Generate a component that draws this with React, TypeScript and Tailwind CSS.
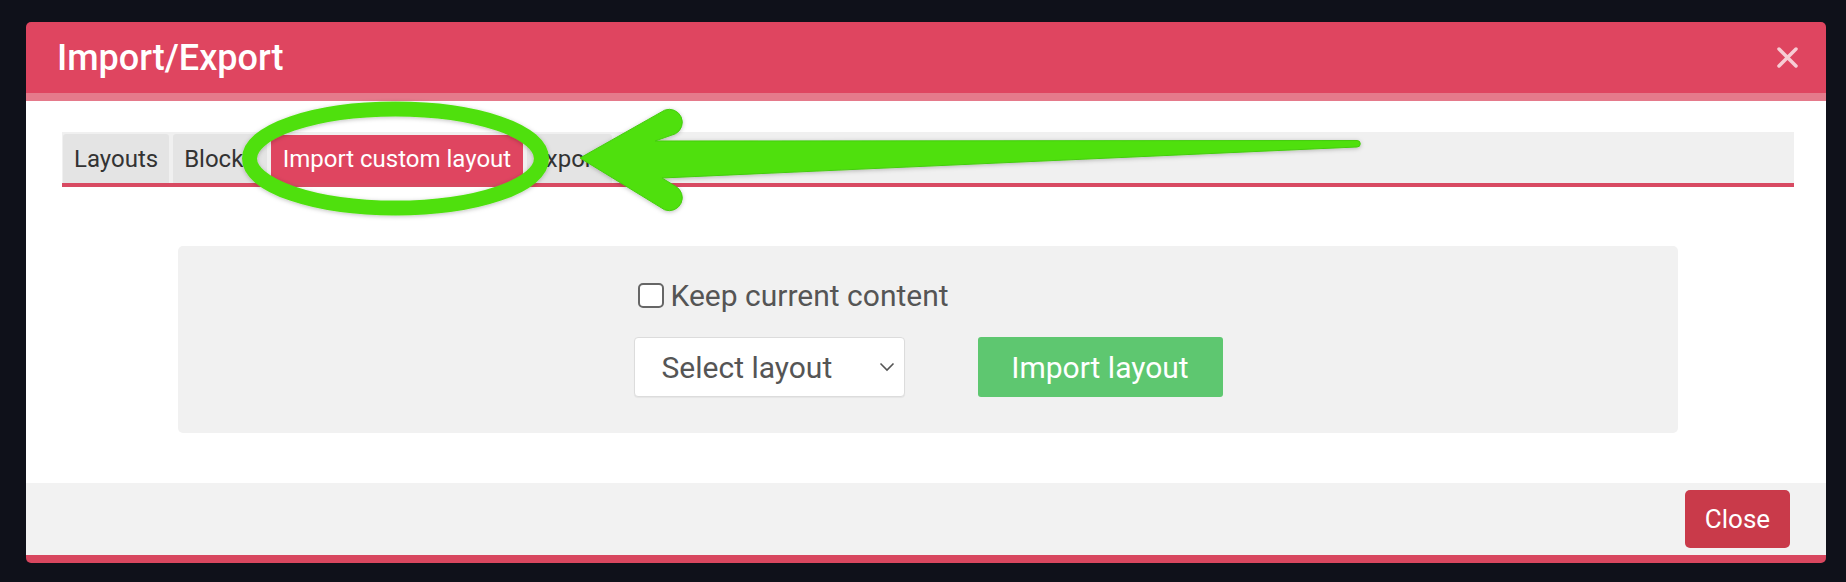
import React from "react";

const tabs = [
  { label: "Layouts", cls: "px-[11px]" },
  { label: "Blocks", cls: "px-[11px]" },
  { label: "Import custom layout", cls: "px-[12px]", active: true },
  { label: "Export", cls: "pl-[5px] pr-[11px]" },
];

function Annotation() {
  return (
    <svg
      className="pointer-events-none absolute left-0 top-0"
      width="1846"
      height="582"
      viewBox="0 0 1846 582"
    >
      <defs>
        <filter id="soft" x="-10%" y="-30%" width="120%" height="160%">
          <feDropShadow dx="0" dy="1" stdDeviation="2" floodColor="#000" floodOpacity="0.25" />
        </filter>
      </defs>
      <g filter="url(#soft)">
        <ellipse cx="395.5" cy="158.5" rx="146" ry="49.5" fill="none" stroke="#4fe00f" strokeWidth="15" />
        <path
          d="M580 158 L664.6 110.2 A13 13 0 0 1 675.4 133.8 L655 141 L1357 140.5 A3.25 3.25 0 0 1 1357 147 L662 178 L675.4 186.2 A13 13 0 0 1 664.6 209.8 Z"
          fill="#4fe00f"
          stroke="#45cc0c"
          strokeWidth="1"
          strokeLinejoin="round"
        />
      </g>
    </svg>
  );
}

export default function App() {
  return (
    <div className="relative h-[582px] w-[1846px] overflow-hidden bg-[#0f111a] pl-[26px] pt-[22px] font-['Roboto',sans-serif]">
      <div className="flex h-[541px] w-[1800px] flex-col overflow-hidden rounded-[5px]">
        <header className="flex h-[71px] items-center justify-between bg-[#df4560] pl-[31px] pr-[28px]">
          <h4 className="text-[36px] font-medium leading-none text-white">Import/Export</h4>
          <svg width="21" height="21" viewBox="0 0 21 21">
            <path d="M2 2 L19 19 M19 2 L2 19" stroke="#f7cdd4" strokeWidth="3.5" strokeLinecap="round" />
          </svg>
        </header>
        <div className="h-[8px] bg-[#e57a8b]" />

        <div className="flex-1 bg-white pl-[36px] pr-[32px] pt-[31px]">
          <div className="flex h-[55px] gap-[4px] border-b-4 border-[#d84a62] bg-[#f0f0f0] pl-[1px] pt-[2px]">
            {tabs.map((tab) => (
              <div
                key={tab.label}
                className={
                  tab.active
                    ? `mt-[1px] flex items-center rounded-t-[3px] bg-[#df4560] text-[24px] text-white ${tab.cls}`
                    : `flex items-center rounded-t-[3px] bg-[#e4e4e4] text-[24px] text-[#333] ${tab.cls}`
                }
              >
                {tab.label}
              </div>
            ))}
          </div>

          <div className="mx-[116px] mt-[59px] flex h-[187px] justify-center rounded-[5px] bg-[#f1f1f1] pt-[29px]">
            <div className="flex flex-col items-start">
              <label className="ml-[4px] flex h-[40px] items-center gap-[7px] text-[30px] text-[#555]">
                <span className="h-[25px] w-[26px] rounded-[5px] border-2 border-[#666] bg-white" />
                Keep current content
              </label>
              <div className="mt-[22px] flex gap-[73px]">
                <div className="flex h-[60px] w-[271px] items-center justify-between rounded-[4px] border border-[#dcdcdc] bg-white pl-[27px] pr-[9px] text-[30px] text-[#555] shadow-[0_1px_1px_rgba(0,0,0,0.05)]">
                  Select layout
                  <svg width="16" height="10" viewBox="0 0 16 10">
                    <path d="M1.5 1.5 L8 8 L14.5 1.5" fill="none" stroke="#555" strokeWidth="1.6" />
                  </svg>
                </div>
                <button className="flex h-[60px] w-[245px] items-center justify-center rounded-[3px] bg-[#5ec770] text-[30px] text-white">
                  Import layout
                </button>
              </div>
            </div>
          </div>
        </div>

        <footer className="flex h-[72px] items-center justify-end bg-[#f2f2f2] pr-[36px]">
          <button className="flex h-[58px] w-[105px] items-center justify-center rounded-[5px] bg-[#c93a4a] text-[26px] text-white">
            Close
          </button>
        </footer>
        <div className="h-[8px] bg-[#d8475f]" />
      </div>
      <Annotation />
    </div>
  );
}
